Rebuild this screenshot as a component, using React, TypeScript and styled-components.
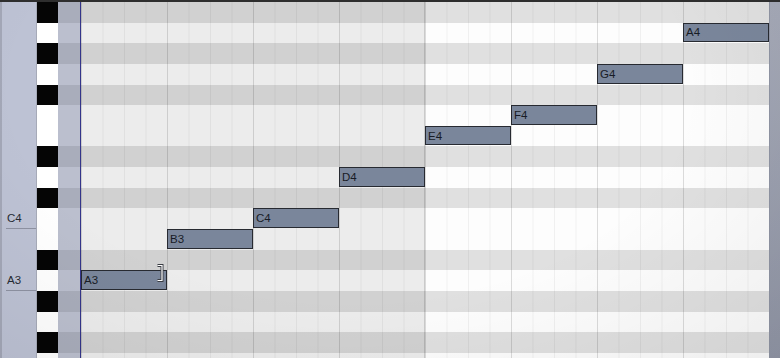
import React from "react";
import styled, { createGlobalStyle } from "styled-components";

const ROW_H = 20.65;
const COL_W = 21.5;
const COLS = 32;

interface Pitch {
  name: string;
  black: boolean;
  label?: boolean;
}

const pitches: Pitch[] = [
  { name: "A#4", black: true },
  { name: "A4", black: false },
  { name: "G#4", black: true },
  { name: "G4", black: false },
  { name: "F#4", black: true },
  { name: "F4", black: false },
  { name: "E4", black: false },
  { name: "D#4", black: true },
  { name: "D4", black: false },
  { name: "C#4", black: true },
  { name: "C4", black: false, label: true },
  { name: "B3", black: false },
  { name: "A#3", black: true },
  { name: "A3", black: false, label: true },
  { name: "G#3", black: true },
  { name: "G3", black: false },
  { name: "F#3", black: true },
  { name: "F3", black: false },
];

const notes = ["A3", "B3", "C4", "D4", "E4", "F4", "G4", "A4"].map(
  (name, i) => ({ name, start: i * 4, length: 4 })
);

const rowOf = (name: string) => pitches.findIndex((p) => p.name === name) + 1;

const GlobalStyle = createGlobalStyle`
  html, body {
    margin: 0;
    padding: 0;
    background: #ffffff;
  }
  body {
    font-family: "Liberation Sans", Arial, sans-serif;
  }
`;

export default function App() {
  return (
    <>
      <GlobalStyle />
      <Window>
        <TopBar />
        <Body>
          <Sidebar>
            {pitches.map((p) => (
              <KeyRow key={p.name}>
                <LabelCell>
                  <LabelBox $labeled={!!p.label}>{p.label ? p.name : ""}</LabelBox>
                </LabelCell>
                <Key $black={p.black} />
                <KeyStrip $black={p.black} />
              </KeyRow>
            ))}
          </Sidebar>

          <Roll>
            {pitches.map((p, i) => (
              <Lane key={p.name} $row={i + 1} $black={p.black} />
            ))}
            <Shade />
            <GridLines />
            {notes.map((n) => (
              <Note
                key={n.name}
                $row={rowOf(n.name)}
                $start={n.start + 1}
                $length={n.length}
              >
                {n.name}
                {n.name === "A3" && (
                  <ResizeCursor width="8" height="18" viewBox="0 0 8 18">
                    <path
                      d="M1.5 1.5 H6 V16.5 H1.5"
                      fill="none"
                      stroke="#3a3d44"
                      strokeWidth="3"
                    />
                    <path
                      d="M1.5 1.5 H6 V16.5 H1.5"
                      fill="none"
                      stroke="#ffffff"
                      strokeWidth="1.2"
                    />
                  </ResizeCursor>
                )}
              </Note>
            ))}
          </Roll>

          <RightStrip />
        </Body>
        <Vignette />
      </Window>
    </>
  );
}

const Window = styled.div`
  position: relative;
  width: 780px;
  height: 358px;
  overflow: hidden;
  display: flex;
  flex-direction: column;
`;

const TopBar = styled.div`
  height: 2px;
  flex: none;
  background: #2e2e2e;
`;

const Body = styled.div`
  flex: 1;
  display: flex;
  overflow: hidden;
`;

const Sidebar = styled.div`
  width: 80px;
  flex: none;
  display: flex;
  flex-direction: column;
  border-right: 1px solid #34358a;
  background: #bcc1d3;
`;

const KeyRow = styled.div`
  height: ${ROW_H}px;
  flex: none;
  display: flex;
`;

const LabelCell = styled.div`
  width: 37px;
  box-sizing: border-box;
  padding-left: 4px;
  border-left: 2px solid #a3a7b7;
  border-right: 1px solid #a6aab8;
  background: #bdc2d4;
  display: flex;
`;

const LabelBox = styled.div<{ $labeled: boolean }>`
  flex: 1;
  display: flex;
  align-items: center;
  padding-left: 1px;
  font-size: 11.5px;
  color: #262a33;
  border-bottom: 1px solid ${(p) => (p.$labeled ? "#8e92a2" : "transparent")};
`;

const Key = styled.div<{ $black: boolean }>`
  width: 21px;
  background: ${(p) => (p.$black ? "#050505" : "#ffffff")};
`;

const KeyStrip = styled.div<{ $black: boolean }>`
  width: 22px;
  background: ${(p) => (p.$black ? "#a9adbb" : "#bbbfce")};
`;

const Roll = styled.div`
  width: ${COL_W * COLS}px;
  flex: none;
  display: grid;
  grid-template-columns: repeat(${COLS}, ${COL_W}px);
  grid-template-rows: repeat(${pitches.length}, ${ROW_H}px);
  align-content: start;
`;

const Lane = styled.div<{ $row: number; $black: boolean }>`
  grid-column: 1 / -1;
  grid-row: ${(p) => p.$row};
  background: ${(p) => (p.$black ? "#e0e0e0" : "#fdfdfd")};
`;

const Shade = styled.div`
  grid-column: 1 / 17;
  grid-row: 1 / -1;
  background: rgba(0, 0, 0, 0.065);
  border-right: 1px solid rgba(0, 0, 0, 0.14);
`;

const GridLines = styled.div`
  grid-column: 1 / -1;
  grid-row: 1 / -1;
  background-image: linear-gradient(
      to right,
      rgba(0, 0, 0, 0.085) 1px,
      transparent 1px
    ),
    linear-gradient(to right, rgba(0, 0, 0, 0.05) 1px, transparent 1px);
  background-size: ${COL_W * 4}px 100%, ${COL_W}px 100%;
`;

const Note = styled.div<{ $row: number; $start: number; $length: number }>`
  position: relative;
  grid-row: ${(p) => p.$row};
  grid-column: ${(p) => p.$start} / span ${(p) => p.$length};
  margin-bottom: 1px;
  box-sizing: border-box;
  border: 1.5px solid #272a31;
  background: #7a869b;
  padding-left: 2px;
  display: flex;
  align-items: center;
  font-size: 11.5px;
  color: #181c26;
`;

const ResizeCursor = styled.svg`
  position: absolute;
  right: 2px;
  top: -7px;
`;

const RightStrip = styled.div`
  flex: 1;
  background: linear-gradient(to bottom, #a5a9b7, #9196a6);
  border-left: 1px solid #8f94a3;
`;

const Vignette = styled.div`
  position: absolute;
  inset: 0;
  pointer-events: none;
  background: radial-gradient(
    ellipse at 45% 25%,
    rgba(0, 0, 0, 0) 55%,
    rgba(0, 0, 0, 0.06) 100%
  );
`;
